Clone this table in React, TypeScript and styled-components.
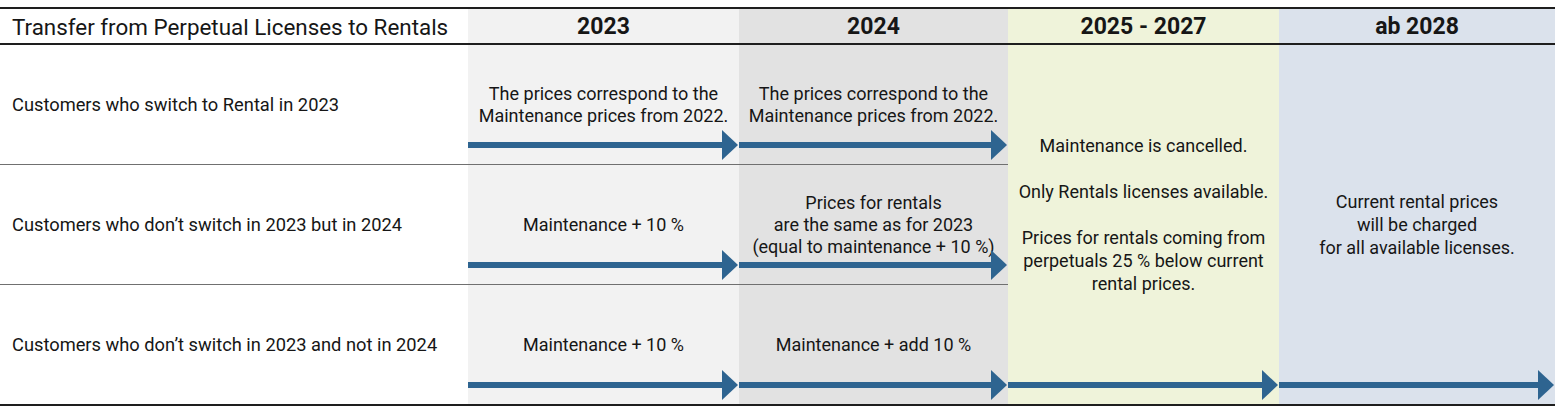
import React from 'react';
import styled, { createGlobalStyle } from 'styled-components';

const GlobalStyle = createGlobalStyle`
  body {
    margin: 0;
    background: #fff;
    font-family: Roboto, "Liberation Sans", Arial, sans-serif;
    color: #161616;
  }
`;

const colors = {
  white: '#ffffff',
  y2023: '#f2f2f2',
  y2024: '#e2e2e2',
  y2025: '#eff3da',
  y2028: '#dbe2ec',
};

type Tone = keyof typeof colors;

const Page = styled.div`
  padding-top: 7px;
`;

const Table = styled.div`
  display: grid;
  grid-template-columns: 468px 271px 269px 271px 276px;
  grid-template-rows: 36px 120px 120px 119px;
  width: 1555px;
  border-top: 2px solid #1e1e1e;
  border-bottom: 2px solid #1e1e1e;
`;

const HeadCell = styled.div<{ $tone: Tone; $left?: boolean }>`
  display: flex;
  align-items: center;
  justify-content: ${(p) => (p.$left ? 'flex-start' : 'center')};
  padding-left: ${(p) => (p.$left ? '12px' : '0')};
  padding-top: 1px;
  background: ${(p) => colors[p.$tone]};
  border-bottom: 2px solid #1e1e1e;
  font-size: ${(p) => (p.$left ? '22.4px' : '23px')};
  font-weight: ${(p) => (p.$left ? 400 : 700)};
`;

const RowLabel = styled.div<{ $last?: boolean }>`
  grid-column: 1;
  display: flex;
  align-items: center;
  padding-left: 12px;
  font-size: 18.3px;
  border-bottom: ${(p) => (p.$last ? 'none' : '1px solid #707070')};
`;

const Cell = styled.div<{ $tone: Tone; $last?: boolean }>`
  position: relative;
  display: flex;
  align-items: center;
  justify-content: center;
  text-align: center;
  background: ${(p) => colors[p.$tone]};
  border-bottom: ${(p) => (p.$last ? 'none' : '1px solid #707070')};
  font-size: 18px;
  line-height: 22px;
`;

const Span = styled.div<{ $tone: Tone; $col: number; $shift?: number }>`
  position: relative;
  grid-row: 2 / 5;
  grid-column: ${(p) => p.$col};
  display: flex;
  align-items: center;
  justify-content: center;
  text-align: center;
  background: ${(p) => colors[p.$tone]};
  padding-bottom: ${(p) => p.$shift || 0}px;
  font-size: 18px;
  line-height: 23px;
`;

const Gap = styled.div`
  height: 23px;
`;

const ArrowWrap = styled.div`
  position: absolute;
  left: 0;
  right: 1px;
  bottom: 4px;
  height: 30px;
  display: flex;
  align-items: center;
`;

const Shaft = styled.span`
  flex: 1;
  height: 6px;
  margin-right: -2px;
  background: #2e6490;
`;

const Arrow = () => (
  <ArrowWrap>
    <Shaft />
    <svg width="16" height="30" viewBox="0 0 16 30">
      <polygon points="0,0 16,15 0,30" fill="#2e6490" />
    </svg>
  </ArrowWrap>
);

const App = () => {
  return (
    <Page>
      <GlobalStyle />
      <Table>
        <HeadCell $tone="white" $left>Transfer from Perpetual Licenses to Rentals</HeadCell>
        <HeadCell $tone="y2023">2023</HeadCell>
        <HeadCell $tone="y2024">2024</HeadCell>
        <HeadCell $tone="y2025">2025 - 2027</HeadCell>
        <HeadCell $tone="y2028">ab 2028</HeadCell>

        <RowLabel>Customers who switch to Rental in 2023</RowLabel>
        <Cell $tone="y2023">
          <div>
            The prices correspond to the
            <br />
            Maintenance prices from 2022.
          </div>
          <Arrow />
        </Cell>
        <Cell $tone="y2024">
          <div>
            The prices correspond to the
            <br />
            Maintenance prices from 2022.
          </div>
          <Arrow />
        </Cell>
        <Span $tone="y2025" $col={4} $shift={20}>
          <div>
            Maintenance is cancelled.
            <Gap />
            Only Rentals licenses available.
            <Gap />
            Prices for rentals coming from
            <br />
            perpetuals 25 % below current
            <br />
            rental prices.
          </div>
          <Arrow />
        </Span>
        <Span $tone="y2028" $col={5}>
          <div>
            Current rental prices
            <br />
            will be charged
            <br />
            for all available licenses.
          </div>
          <Arrow />
        </Span>

        <RowLabel>Customers who don’t switch in 2023 but in 2024</RowLabel>
        <Cell $tone="y2023">
          <div>Maintenance + 10 %</div>
          <Arrow />
        </Cell>
        <Cell $tone="y2024">
          <div>
            Prices for rentals
            <br />
            are the same as for 2023
            <br />
            (equal to maintenance + 10 %)
          </div>
          <Arrow />
        </Cell>

        <RowLabel $last>Customers who don’t switch in 2023 and not in 2024</RowLabel>
        <Cell $tone="y2023" $last>
          <div>Maintenance + 10 %</div>
          <Arrow />
        </Cell>
        <Cell $tone="y2024" $last>
          <div>Maintenance + add 10 %</div>
          <Arrow />
        </Cell>
      </Table>
    </Page>
  );
};

export default App;
